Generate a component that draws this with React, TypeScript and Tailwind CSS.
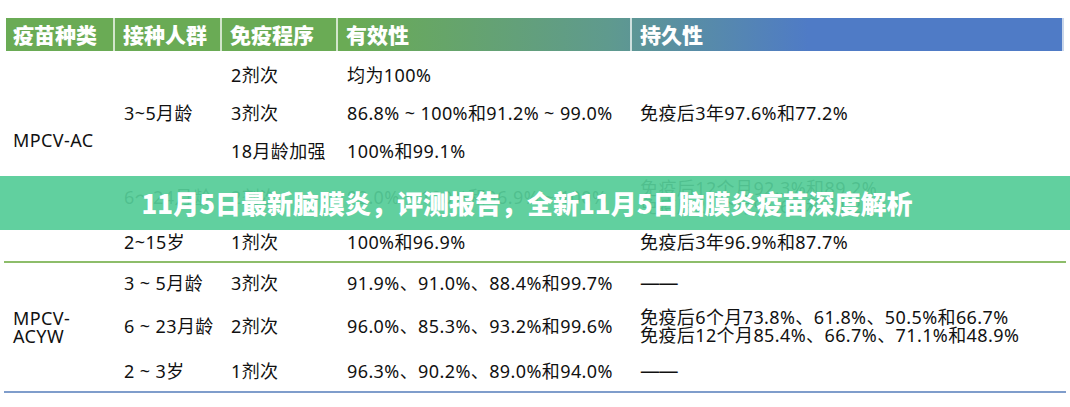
import React from "react";

const font = "font-['Noto_Sans','Noto_Sans_CJK_SC',sans-serif]";

function Cell({
  children,
  className = "",
}: {
  children?: React.ReactNode;
  className?: string;
}) {
  return <div className={`flex items-center ${className}`}>{children}</div>;
}

export default function App() {
  return (
    <div className={`relative w-[1070px] h-[407px] bg-white overflow-hidden ${font} text-[18px] tracking-[0.4px] text-[#111] leading-[18px]`}>
      <div className="pt-[18px] pl-[6px] w-[1064px]">
        {/* header */}
        <div className="grid grid-cols-[109px_107px_116px_294px_432px] h-[33px] bg-[linear-gradient(90deg,#6aab55_0%,#6aab55_33%,#5f9a8e_57%,#4f7bc6_76%,#4f7bc6_100%)] text-white font-black text-[21px] tracking-normal border-r-2 border-[#c9d6ea]">
          <div className="flex items-center pl-[7px] border-r-2 border-white/70">疫苗种类</div>
          <div className="flex items-center pl-[8px] border-r-2 border-white/70">接种人群</div>
          <div className="flex items-center pl-[8px] border-r-2 border-white/70">免疫程序</div>
          <div className="flex items-center pl-[8px] border-r-2 border-white/70">有效性</div>
          <div className="flex items-center pl-[8px]">持久性</div>
        </div>
      </div>
      {/* section 1 */}
      <div className="pl-[4px] w-[1066px]">
        <div className="mt-[5px] ml-[2px] grid grid-cols-[109px_107px_116px_294px_432px] grid-rows-[38px_38px_38px_53px_38px]">
          <Cell className="row-start-1 row-span-4 col-start-1 pl-[7px]">MPCV-AC</Cell>
          <Cell className="row-start-1 row-span-3 col-start-2 pl-[9px]">3~5月龄</Cell>
          <Cell className="row-start-4 col-start-2 pl-[9px]">6～24月龄</Cell>
          <Cell className="row-start-5 col-start-2 pl-[9px]">2~15岁</Cell>
          <Cell className="row-start-1 col-start-3 pl-[9px]">2剂次</Cell>
          <Cell className="row-start-2 col-start-3 pl-[9px]">3剂次</Cell>
          <Cell className="row-start-3 col-start-3 pl-[9px]">18月龄加强</Cell>
          <Cell className="row-start-4 col-start-3 pl-[9px]">2剂次</Cell>
          <Cell className="row-start-5 col-start-3 pl-[9px]">1剂次</Cell>
          <Cell className="row-start-1 col-start-4 pl-[9px]">均为100%</Cell>
          <Cell className="row-start-2 col-start-4 pl-[9px]">86.8% ~ 100%和91.2% ~ 99.0%</Cell>
          <Cell className="row-start-3 col-start-4 pl-[9px]">100%和99.1%</Cell>
          <Cell className="row-start-4 col-start-4 pl-[9px]">92.0% ~ 100%和96.9% ~ 100%</Cell>
          <Cell className="row-start-5 col-start-4 pl-[9px]">100%和96.9%</Cell>
          <Cell className="row-start-1 row-span-3 col-start-5 pl-[8px]">免疫后3年97.6%和77.2%</Cell>
          <Cell className="row-start-4 col-start-5 pl-[8px]">
            <div className="flex flex-col">
              <span>免疫后12个月92.3%和89.2%</span>
              <span>免疫后24个月91.6%和84.2%</span>
            </div>
          </Cell>
          <Cell className="row-start-5 col-start-5 pl-[8px]">免疫后3年96.9%和87.7%</Cell>
        </div>
        {/* section 2 */}
        <div className="border-t-2 border-[#8dbd6a] border-b-2 border-b-[#7f9dcb]">
          <div className="ml-[2px] grid grid-cols-[109px_107px_116px_294px_432px] grid-rows-[39px_48px_41px]">
            <Cell className="row-start-1 row-span-3 col-start-1 pl-[7px]">
              <div className="flex flex-col">
                <span>MPCV-</span>
                <span>ACYW</span>
              </div>
            </Cell>
            <Cell className="row-start-1 col-start-2 pl-[9px]">3 ~ 5月龄</Cell>
            <Cell className="row-start-2 col-start-2 pl-[9px]">6 ~ 23月龄</Cell>
            <Cell className="row-start-3 col-start-2 pl-[9px]">2 ~ 3岁</Cell>
            <Cell className="row-start-1 col-start-3 pl-[9px]">3剂次</Cell>
            <Cell className="row-start-2 col-start-3 pl-[9px]">2剂次</Cell>
            <Cell className="row-start-3 col-start-3 pl-[9px]">1剂次</Cell>
            <Cell className="row-start-1 col-start-4 pl-[9px]">91.9%、91.0%、88.4%和99.7%</Cell>
            <Cell className="row-start-2 col-start-4 pl-[9px]">96.0%、85.3%、93.2%和99.6%</Cell>
            <Cell className="row-start-3 col-start-4 pl-[9px]">96.3%、90.2%、89.0%和94.0%</Cell>
            <Cell className="row-start-1 col-start-5 pl-[8px] tracking-[-1.5px] text-[20px]">——</Cell>
            <Cell className="row-start-2 col-start-5 pl-[8px]">
              <div className="flex flex-col">
                <span>免疫后6个月73.8%、61.8%、50.5%和66.7%</span>
                <span>免疫后12个月85.4%、66.7%、71.1%和48.9%</span>
              </div>
            </Cell>
            <Cell className="row-start-3 col-start-5 pl-[8px] tracking-[-1.5px] text-[20px]">——</Cell>
          </div>
        </div>
      </div>
      {/* banner overlay */}
      <div className="absolute left-0 right-0 top-[176px] h-[54px] bg-[#55cc98]/[0.93] flex items-center justify-center">
        <span className="text-white font-black text-[26px] tracking-normal leading-none pr-[16px] font-['Noto_Sans_CJK_SC','Noto_Sans',sans-serif]">
          11月5日最新脑膜炎，评测报告，全新11月5日脑膜炎疫苗深度解析
        </span>
      </div>
    </div>
  );
}
